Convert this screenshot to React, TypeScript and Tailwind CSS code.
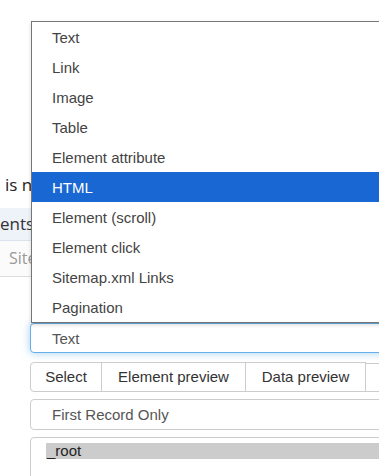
const OPTIONS = [
  "Text",
  "Link",
  "Image",
  "Table",
  "Element attribute",
  "HTML",
  "Element (scroll)",
  "Element click",
  "Sitemap.xml Links",
  "Pagination",
];

const SELECTED = "HTML";

function SelectorForm() {
  return (
    <div className="ml-[30px] mt-[46px] w-[420px] font-['Liberation_Sans',Arial,sans-serif] text-[15px]">
      <div className="h-[30px] rounded-[4px] border border-[#66afe9] bg-white pl-[21px] leading-[29px] text-[#555] shadow-[0_0_8px_rgba(102,175,233,0.6)]">
        Text
      </div>
      <div className="mt-[9px] flex h-[30px] text-[#333]">
        <button className="w-[72px] rounded-l-[4px] border border-[#ccc] bg-white leading-[28px]">Select</button>
        <button className="-ml-px w-[145px] border border-[#ccc] bg-white leading-[28px]">Element preview</button>
        <button className="-ml-px w-[121px] border border-[#ccc] bg-white leading-[28px]">Data preview</button>
        <button className="-ml-px mt-px w-[80px] border border-[#ccc] bg-white leading-[28px]"></button>
      </div>
      <div className="mt-[7px] h-[31px] rounded-[4px] border border-[#ccc] bg-white pl-[21px] leading-[29px] text-[#555]">
        First Record Only
      </div>
      <div className="mt-[7px] h-[60px] rounded-[4px] border border-[#ccc] bg-white pl-[15px] pt-[5px] text-[#222]">
        <div className="h-[16px] bg-[#cccccc] pl-px leading-[16px]">_root</div>
      </div>
    </div>
  );
}

function OptionList() {
  return (
    <div className="absolute left-[31px] top-[21px] w-[360px] border border-[#767676] bg-white font-['Liberation_Sans',Arial,sans-serif] text-[15px] shadow-[0_2px_4px_rgba(0,0,0,0.15)]">
      {OPTIONS.map((opt) => (
        <div
          key={opt}
          className={`h-[30px] overflow-hidden pl-[20px] leading-[32px] ${
            opt === SELECTED ? "bg-[#1967d2] text-white" : "text-[#444]"
          }`}
        >
          {opt}
        </div>
      ))}
    </div>
  );
}

export default function App() {
  return (
    <div className="relative h-[476px] w-[379px] overflow-hidden bg-white">
      <div className="pt-[172px] font-['Open_Sans',sans-serif]">
        <p className="h-[26px] w-[31px] overflow-hidden whitespace-nowrap pl-[5px] text-[17px] leading-[26px] text-[#222]">is n</p>
        <div className="mt-[10px] h-[33px] border-b border-[#dde3ee] bg-[#eef2f9] text-[17px] leading-[32px] text-[#333]">
          <span className="block w-[31px] overflow-hidden whitespace-nowrap">ents</span>
        </div>
        <div className="h-[36px] border-b border-[#dddddd] bg-[#fbfbfb] text-[16px] leading-[35px] text-[#999]">
          <span className="block w-[31px] overflow-hidden whitespace-nowrap pl-[9px]">Site</span>
        </div>
      </div>
      <SelectorForm />
      <OptionList />
    </div>
  );
}
